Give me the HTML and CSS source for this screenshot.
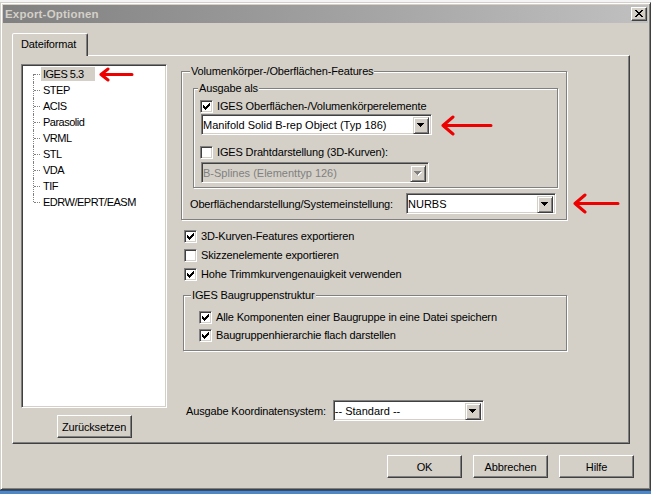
FILE: index.html
```html
<!DOCTYPE html>
<html lang="de">

<head>
    <meta charset="UTF-8">
    <meta name="viewport" content="width=device-width, initial-scale=1.0">
    <title>Export-Optionen</title>
    <link rel="stylesheet" href="styles.css">
</head>

<body>
    <div class="desk-top"></div>
    <div class="window">
        <div class="titlebar">
            <span class="title">Export-Optionen</span>
            <span class="close">
                <svg width="8" height="7" viewBox="0 0 8 7"><path d="M0 0h2v1H0zM6 0h2v1H6zM1 1h2v1H1zM5 1h2v1H5zM2 2h4v1H2zM3 3h2v1H3zM2 4h4v1H2zM1 5h2v1H1zM5 5h2v1H5zM0 6h2v1H0zM6 6h2v1H6z"/></svg>
            </span>
        </div>
        <div class="client">
            <div class="tabs">
                <div class="tab">Dateiformat</div>
            </div>
            <div class="panel">
                <div class="left">
                    <ul class="tree">
                        <li><span class="sel">IGES 5.3</span></li>
                        <li><span>STEP</span></li>
                        <li><span>ACIS</span></li>
                        <li><span>Parasolid</span></li>
                        <li><span>VRML</span></li>
                        <li><span>STL</span></li>
                        <li><span>VDA</span></li>
                        <li><span>TIF</span></li>
                        <li><span>EDRW/EPRT/EASM</span></li>
                    </ul>
                    <div class="btn reset">Zurücksetzen</div>
                </div>
                <div class="right">
                    <fieldset class="group g1">
                        <legend>Volumenkörper-/Oberflächen-Features</legend>
                        <fieldset class="group inner">
                            <legend>Ausgabe als</legend>
                            <div class="check">
                                <span class="box"><svg width="13" height="13" viewBox="0 0 13 13"><path d="M3 5h1v3H3zM4 6h1v3H4zM5 7h1v3H5zM6 6h1v3H6zM7 5h1v3H7zM8 4h1v3H8zM9 3h1v3H9z"/></svg></span>
                                <span>IGES Oberflächen-/Volumenkörperelemente</span>
                            </div>
                            <div class="combo c1">
                                <span class="value">Manifold Solid B-rep Object (Typ 186)</span>
                                <span class="drop"><svg width="8" height="5" viewBox="0 0 8 5"><path d="M0 0h7v1H0zM1 1h5v1H1zM2 2h3v1H2zM3 3h1v1H3z"/></svg></span>
                            </div>
                            <div class="check c2">
                                <span class="box"></span>
                                <span>IGES Drahtdarstellung (3D-Kurven):</span>
                            </div>
                            <div class="combo off c3">
                                <span class="value">B-Splines (Elementtyp 126)</span>
                                <span class="drop"><svg width="8" height="5" viewBox="0 0 8 5"><path fill="#fff" d="M1 1h7v1H1zM2 2h5v1H2zM3 3h3v1H3zM4 4h1v1H4z"/><path fill="#808080" d="M0 0h7v1H0zM1 1h5v1H1zM2 2h3v1H2zM3 3h1v1H3z"/></svg></span>
                            </div>
                        </fieldset>
                        <div class="field-row">
                            <span>Oberflächendarstellung/Systemeinstellung:</span>
                            <div class="combo nurbs">
                                <span class="value">NURBS</span>
                                <span class="drop"><svg width="8" height="5" viewBox="0 0 8 5"><path d="M0 0h7v1H0zM1 1h5v1H1zM2 2h3v1H2zM3 3h1v1H3z"/></svg></span>
                            </div>
                        </div>
                    </fieldset>

                    <div class="opts">
                        <div class="check">
                            <span class="box"><svg width="13" height="13" viewBox="0 0 13 13"><path d="M3 5h1v3H3zM4 6h1v3H4zM5 7h1v3H5zM6 6h1v3H6zM7 5h1v3H7zM8 4h1v3H8zM9 3h1v3H9z"/></svg></span>
                            <span>3D-Kurven-Features exportieren</span>
                        </div>
                        <div class="check">
                            <span class="box"></span>
                            <span>Skizzenelemente exportieren</span>
                        </div>
                        <div class="check">
                            <span class="box"><svg width="13" height="13" viewBox="0 0 13 13"><path d="M3 5h1v3H3zM4 6h1v3H4zM5 7h1v3H5zM6 6h1v3H6zM7 5h1v3H7zM8 4h1v3H8zM9 3h1v3H9z"/></svg></span>
                            <span>Hohe Trimmkurvengenauigkeit verwenden</span>
                        </div>
                    </div>

                    <fieldset class="group g3">
                        <legend>IGES Baugruppenstruktur</legend>
                        <div class="check">
                            <span class="box"><svg width="13" height="13" viewBox="0 0 13 13"><path d="M3 5h1v3H3zM4 6h1v3H4zM5 7h1v3H5zM6 6h1v3H6zM7 5h1v3H7zM8 4h1v3H8zM9 3h1v3H9z"/></svg></span>
                            <span>Alle Komponenten einer Baugruppe in eine Datei speichern</span>
                        </div>
                        <div class="check">
                            <span class="box"><svg width="13" height="13" viewBox="0 0 13 13"><path d="M3 5h1v3H3zM4 6h1v3H4zM5 7h1v3H5zM6 6h1v3H6zM7 5h1v3H7zM8 4h1v3H8zM9 3h1v3H9z"/></svg></span>
                            <span>Baugruppenhierarchie flach darstellen</span>
                        </div>
                    </fieldset>

                    <div class="coord-row">
                        <span>Ausgabe Koordinatensystem:</span>
                        <div class="combo std">
                            <span class="value">-- Standard --</span>
                            <span class="drop"><svg width="8" height="5" viewBox="0 0 8 5"><path d="M0 0h7v1H0zM1 1h5v1H1zM2 2h3v1H2zM3 3h1v1H3z"/></svg></span>
                        </div>
                    </div>
                </div>
            </div>
            <div class="actions">
                <div class="btn">OK</div>
                <div class="btn">Abbrechen</div>
                <div class="btn">Hilfe</div>
            </div>
        </div>
    </div>
    <div class="desk-bottom"></div>

    <!-- rote Markierungen -->
    <svg class="mark m1" width="36" height="15" viewBox="0 0 36 15"><path d="M34 7.5H3M10 2L3 7.5L10 13"/></svg>
    <svg class="mark m2" width="53" height="21" viewBox="0 0 53 21"><path d="M51 10.5H3M13 2L3 10.5L13 19"/></svg>
    <svg class="mark m3" width="48" height="21" viewBox="0 0 48 21"><path d="M46 10.5H3M13 2L3 10.5L13 19"/></svg>
</body>

</html>
```

FILE: styles.css
```css
* {
    padding: 0;
    margin: 0;
}

body {
    width: 651px;
    height: 494px;
    overflow: hidden;
    background: #d4d0c8;
    font-family: "Liberation Sans", Arial, sans-serif;
    font-size: 11px;
    letter-spacing: -0.15px;
    color: #000;
}

.desk-top {
    height: 2px;
    background: #f4f4f4;
}

.desk-bottom {
    height: 4px;
    box-sizing: border-box;
    border-top: 1px solid #2b4f7d;
    background: #4f86c4;
}

.window {
    width: 651px;
    height: 488px;
    box-sizing: border-box;
    border: 1px solid;
    border-color: #d4d0c8 #404040 #404040 #d4d0c8;
    box-shadow: inset 1px 1px #fff, inset -1px -1px #808080;
    padding: 2px;
    display: flex;
    flex-direction: column;
}

.titlebar {
    height: 18px;
    display: flex;
    align-items: center;
    justify-content: space-between;
    background: linear-gradient(to right, #808080, #c0c0c0);
    padding: 0 1px 0 2px;
}

.title {
    color: #d4d0c8;
    font-weight: bold;
    font-size: 11.5px;
    letter-spacing: 0.2px;
}

.close {
    width: 16px;
    height: 14px;
    box-sizing: border-box;
    background: #d4d0c8;
    border: 1px solid;
    border-color: #fff #404040 #404040 #fff;
    box-shadow: inset -1px -1px #808080;
    display: flex;
    justify-content: center;
    align-items: flex-start;
    padding-top: 2px;
}

.close svg {
    display: block;
}

.client {
    flex: 1;
    padding: 10px 0 0 9px;
}

.tabs {
    display: flex;
}

.tab {
    width: 76px;
    height: 23px;
    box-sizing: border-box;
    margin-bottom: -1px;
    position: relative;
    background: #d4d0c8;
    border: 1px solid;
    border-bottom: 0;
    border-color: #fff #404040 transparent #fff;
    box-shadow: inset -1px 0 #808080;
    border-radius: 2px 2px 0 0;
    padding: 4px 0 0 8px;
    line-height: 13px;
}

.panel {
    width: 618px;
    height: 389px;
    box-sizing: border-box;
    border: 1px solid;
    border-color: #fff #404040 #404040 #fff;
    box-shadow: inset -1px -1px #808080;
    display: flex;
    align-items: flex-start;
    padding: 8px 0 0 8px;
}

.left {
    display: flex;
    flex-direction: column;
    align-items: center;
}

.tree {
    width: 146px;
    height: 344px;
    box-sizing: border-box;
    list-style: none;
    background: #fff;
    border: 1px solid;
    border-color: #808080 #fff #fff #808080;
    box-shadow: inset 1px 1px #404040, inset -1px -1px #d4d0c8;
    padding: 1px;
    letter-spacing: -0.5px;
}

.tree li {
    height: 16px;
    display: flex;
    align-items: center;
    padding-left: 18px;
    position: relative;
}

.tree li::before {
    content: "";
    position: absolute;
    left: 10px;
    top: 0;
    bottom: 0;
    border-left: 1px dotted #808080;
}

.tree li:first-child::before {
    top: 8px;
}

.tree li:last-child::before {
    bottom: 8px;
}

.tree li::after {
    content: "";
    position: absolute;
    left: 11px;
    top: 8px;
    width: 6px;
    border-top: 1px dotted #808080;
}

.tree span {
    line-height: 14px;
    padding: 0 2px;
    color: #000;
}

.tree .sel {
    background: #d4d0c8;
    padding-right: 11px;
}

.btn {
    width: 75px;
    height: 23px;
    box-sizing: border-box;
    border: 1px solid;
    border-color: #fff #404040 #404040 #fff;
    box-shadow: inset -1px -1px #808080;
    display: flex;
    align-items: center;
    justify-content: center;
}

.reset {
    margin-top: 7px;
}

.right {
    margin: 1px 0 0 14px;
}

.group {
    border: 1px solid #808080;
    box-shadow: inset 1px 1px #fff, 1px 1px #fff;
    min-width: 0;
    box-sizing: border-box;
}

.group legend {
    line-height: 13px;
    padding: 0 1px;
    background: #d4d0c8;
}

.g1 {
    width: 386px;
    padding: 4px 10px 5px 8px;
}

.inner {
    width: 365px;
    margin-left: 3px;
    padding: 5px 0 4px 4px;
}

.inner .check {
    margin-left: 2px;
}

.check {
    display: flex;
    align-items: center;
    gap: 4px;
    height: 13px;
    line-height: 13px;
}

.box {
    display: block;
    flex: none;
    width: 13px;
    height: 13px;
    box-sizing: border-box;
    background: #fff;
    border: 1px solid;
    border-color: #808080 #fff #fff #808080;
    box-shadow: inset 1px 1px #404040, inset -1px -1px #d4d0c8;
}

.box svg {
    display: block;
    margin: -1px;
}

.combo {
    display: flex;
    height: 21px;
    box-sizing: border-box;
    background: #fff;
    border: 1px solid;
    border-color: #808080 #fff #fff #808080;
    box-shadow: inset 1px 1px #404040, inset -1px -1px #d4d0c8;
    padding: 2px 2px 2px 1px;
    letter-spacing: 0;
}

.combo .value {
    flex: 1;
    line-height: 17px;
    white-space: nowrap;
}

.drop {
    width: 16px;
    height: 17px;
    box-sizing: border-box;
    background: #d4d0c8;
    border: 1px solid;
    border-color: #d4d0c8 #404040 #404040 #d4d0c8;
    box-shadow: inset 1px 1px #fff, inset -1px -1px #808080;
    display: flex;
    align-items: center;
    justify-content: center;
}

.drop svg {
    display: block;
}

.off {
    background: #d4d0c8;
}

.off .value {
    color: #808080;
}

.c1 {
    width: 231px;
    margin: 1px 0 0 3px;
}

.c2 {
    margin-top: 11px;
}

.c3 {
    width: 228px;
    margin: 3px 0 0 3px;
}

.field-row {
    display: flex;
    justify-content: space-between;
    align-items: center;
    margin-top: 5px;
}

.nurbs {
    width: 150px;
}

.opts {
    display: flex;
    flex-direction: column;
    gap: 6px;
    margin: 10px 0 0 3px;
}

.g3 {
    width: 384px;
    margin: 8px 0 0 2px;
    padding: 9px 0 8px 7px;
}

.g3 .check {
    margin-left: 8px;
}

.g3 .check + .check {
    margin-top: 5px;
}

.coord-row {
    display: flex;
    align-items: center;
    gap: 7px;
    margin: 49px 0 0 5px;
}

.std {
    width: 151px;
}

.actions {
    display: flex;
    justify-content: flex-end;
    gap: 11px;
    margin-top: 11px;
    padding-right: 14px;
}

.mark {
    position: absolute;
    fill: none;
    stroke: #ec0000;
    stroke-width: 3;
    stroke-linecap: round;
    stroke-linejoin: round;
}

.m1 {
    left: 98px;
    top: 67px;
}

.m2 {
    left: 440px;
    top: 115px;
}

.m3 {
    left: 572px;
    top: 193px;
}
```
